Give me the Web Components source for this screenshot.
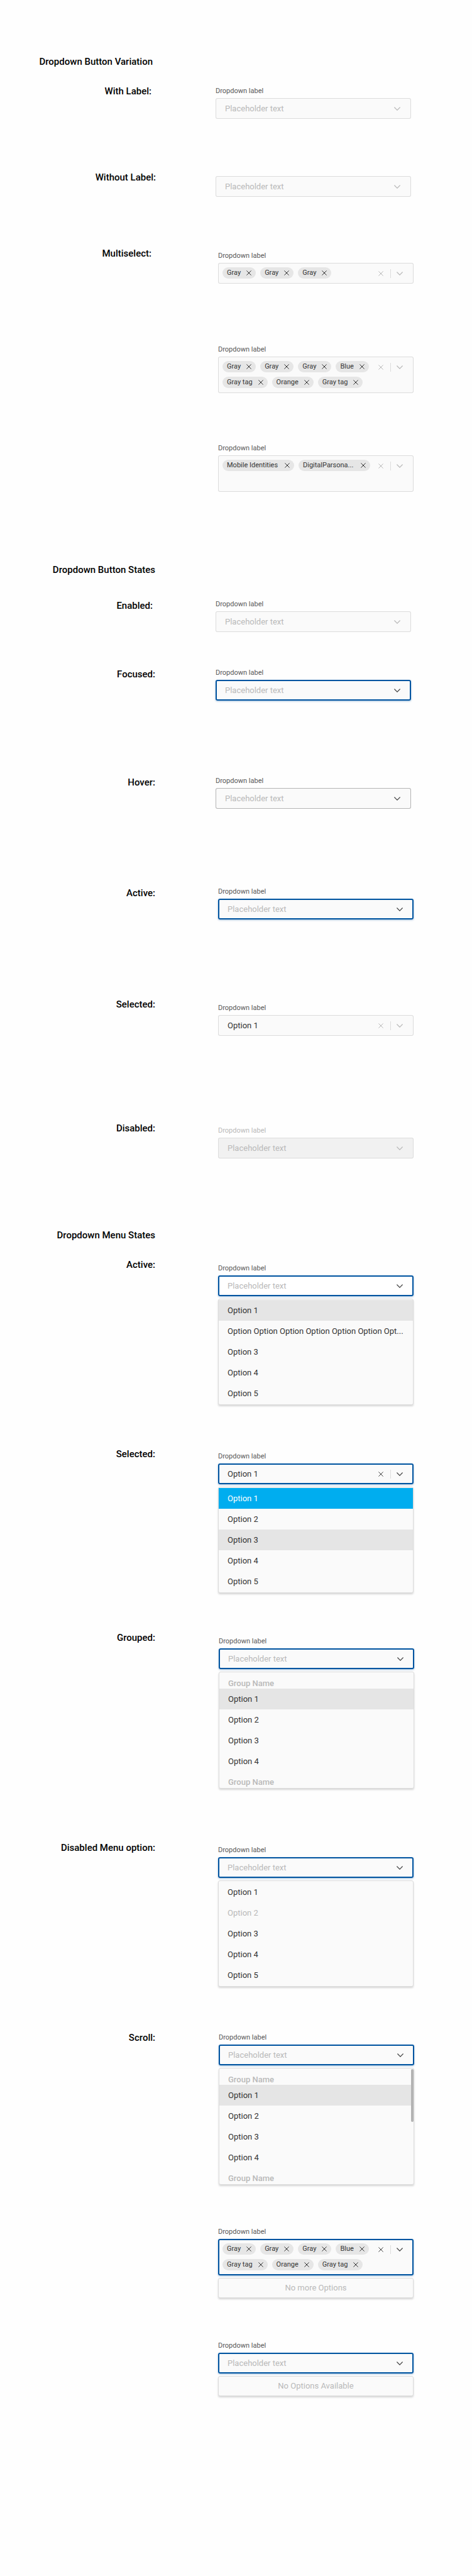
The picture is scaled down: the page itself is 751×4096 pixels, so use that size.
<!DOCTYPE html>
<html lang="en">
<head>
<meta charset="utf-8">
<meta name="viewport" content="width=device-width, initial-scale=1">
<title>Dropdown</title>
<style>
  body {
    margin: 0;
    background: #fefefe;
    color: #000;
    font-family: Roboto, "Liberation Sans", sans-serif;
  }
  main { padding: 88px 0 284px; }
</style>
</head>
<body>
<main>
  <spec-section heading="Dropdown Button Variation" edge="near">
    <spec-row title="With Label:" edge="near" lead="short" style="--space:27px"><drop-down label="Dropdown label"></drop-down></spec-row>
    <spec-row title="Without Label:" edge="mid" lead="short" drop="low" style="--space:83px"><drop-down></drop-down></spec-row>
    <spec-row title="Multiselect:" edge="near" drop="mid" style="--space:80px"><drop-down label="Dropdown label" chips="Gray|Gray|Gray"></drop-down></spec-row>
    <spec-row style="--space:97px"><drop-down label="Dropdown label" chips="Gray|Gray|Gray|Blue|Gray tag|Orange|Gray tag" tall></drop-down></spec-row>
    <spec-row style="--space:80px"><drop-down label="Dropdown label" chips="Mobile Identities|DigitalParsona..." tall></drop-down></spec-row>
  </spec-section>

  <spec-section heading="Dropdown Button States" style="--space:114px">
    <spec-row title="Enabled:" edge="inner" lead="short" drop="none" style="--space:37px"><drop-down label="Dropdown label"></drop-down></spec-row>
    <spec-row title="Focused:" lead="short" drop="none" style="--space:57px"><drop-down label="Dropdown label" state="focus"></drop-down></spec-row>
    <spec-row title="Hover:" lead="short" drop="none" style="--space:120px"><drop-down label="Dropdown label" state="hover"></drop-down></spec-row>
    <spec-row title="Active:" drop="none" style="--space:124px"><drop-down label="Dropdown label" state="focus"></drop-down></spec-row>
    <spec-row title="Selected:" drop="low" style="--space:125px"><drop-down label="Dropdown label" value="Option 1"></drop-down></spec-row>
    <spec-row title="Disabled:" drop="mid" style="--space:137px"><drop-down label="Dropdown label" state="disabled"></drop-down></spec-row>
  </spec-section>

  <spec-section heading="Dropdown Menu States" style="--space:112px">
    <spec-row title="Active:" drop="low" style="--space:27px">
      <drop-down label="Dropdown label" state="focus" blank>
        <drop-menu>
          <menu-option hover>Option 1</menu-option>
          <menu-option>Option Option Option Option Option Option Opt...</menu-option>
          <menu-option>Option 3</menu-option>
          <menu-option>Option 4</menu-option>
          <menu-option>Option 5</menu-option>
        </drop-menu>
      </drop-down>
    </spec-row>
    <spec-row title="Selected:" drop="mid" style="--space:68px">
      <drop-down label="Dropdown label" state="focus" value="Option 1">
        <drop-menu>
          <menu-option selected>Option 1</menu-option>
          <menu-option>Option 2</menu-option>
          <menu-option hover>Option 3</menu-option>
          <menu-option>Option 4</menu-option>
          <menu-option>Option 5</menu-option>
        </drop-menu>
      </drop-down>
    </spec-row>
    <spec-row title="Grouped:" drop="low" lead="long" style="--space:61px">
      <drop-down label="Dropdown label" state="focus">
        <drop-menu>
          <menu-group>Group Name</menu-group>
          <menu-option hover>Option 1</menu-option>
          <menu-option>Option 2</menu-option>
          <menu-option>Option 3</menu-option>
          <menu-option>Option 4</menu-option>
          <menu-group>Group Name</menu-group>
        </drop-menu>
      </drop-down>
    </spec-row>
    <spec-row title="Disabled Menu option:" drop="mid" style="--space:84px">
      <drop-down label="Dropdown label" state="focus">
        <drop-menu>
          <menu-option>Option 1</menu-option>
          <menu-option disabled>Option 2</menu-option>
          <menu-option>Option 3</menu-option>
          <menu-option>Option 4</menu-option>
          <menu-option>Option 5</menu-option>
        </drop-menu>
      </drop-down>
    </spec-row>
    <spec-row title="Scroll:" lead="long" style="--space:71px">
      <drop-down label="Dropdown label" state="focus">
        <drop-menu scroll>
          <menu-group>Group Name</menu-group>
          <menu-option hover>Option 1</menu-option>
          <menu-option>Option 2</menu-option>
          <menu-option>Option 3</menu-option>
          <menu-option>Option 4</menu-option>
          <menu-group>Group Name</menu-group>
        </drop-menu>
      </drop-down>
    </spec-row>
    <spec-row style="--space:67px">
      <drop-down label="Dropdown label" state="focus" chips="Gray|Gray|Gray|Blue|Gray tag|Orange|Gray tag" tall>
        <drop-menu empty>No more Options</drop-menu>
      </drop-down>
    </spec-row>
    <spec-row style="--space:68px">
      <drop-down label="Dropdown label" state="focus">
        <drop-menu empty>No Options Available</drop-menu>
      </drop-down>
    </spec-row>
  </spec-section>
</main>

<script>
const CHEVRON = `<svg width="10" height="6" viewBox="0 0 10 6" fill="none" stroke="currentColor" stroke-width="1.2" aria-hidden="true"><path d="M.4.5 5 5.1 9.6.5"/></svg>`;
const CROSS = `<svg width="8" height="8" viewBox="0 0 8 8" fill="none" stroke="currentColor" stroke-width="1" aria-hidden="true"><path d="M.4.4l7.2 7.2M7.6.4.4 7.6"/></svg>`;

/* A titled block; the heading ends on the same edge as the row titles. */
class SpecSection extends HTMLElement {
  connectedCallback() {
    if (this.shadowRoot) return;
    this.attachShadow({ mode: 'open' }).innerHTML = `
      <style>
        :host { display: block; margin-top: var(--space, 0px); --edge: 247; }
        :host([edge="near"]) { --edge: 243; }
        .head { display: flex; }
        h2 {
          flex: 0 0 calc(var(--edge) / 751 * 100%);
          margin: 0; text-align: right; white-space: nowrap;
          font-size: 15px; line-height: 20px; font-weight: 500;
        }
      </style>
      <section><div class="head"><h2></h2></div><slot></slot></section>`;
    this.shadowRoot.querySelector('h2').textContent = this.getAttribute('heading');
  }
}

/* One specimen: its name on the left, the component on the right. */
class SpecRow extends HTMLElement {
  connectedCallback() {
    if (this.shadowRoot) return;
    const title = this.getAttribute('title') || '';
    this.removeAttribute('title');
    this.attachShadow({ mode: 'open' }).innerHTML = `
      <style>
        :host { display: flex; align-items: flex-start; margin-top: var(--space, 0px); --edge: 247; --lead: 347; --drop: 2px; }
        :host([edge="near"]) { --edge: 241; }
        :host([edge="inner"]) { --edge: 243; }
        :host([edge="mid"]) { --edge: 248; }
        :host([lead="short"]) { --lead: 343; }
        :host([lead="long"]) { --lead: 348; }
        :host([drop="none"]) { --drop: 0px; }
        :host([drop="mid"]) { --drop: 6px; }
        :host([drop="low"]) { --drop: 8px; }
        :host([untitled]) { --drop: 0px; }
        h3 {
          flex: 0 0 calc(var(--edge) / 751 * 100%);
          margin: 0 calc((var(--lead) - var(--edge)) / 751 * 100%) 0 0;
          text-align: right; white-space: nowrap;
          font-size: 15px; line-height: 20px; font-weight: 500;
        }
        .blank { flex: 0 0 calc(var(--lead) / 751 * 100%); }
        .specimen { flex: 0 0 calc(311 / 751 * 100%); min-width: 0; padding-top: var(--drop); }
      </style>
      ${title ? '<h3></h3>' : '<div class="blank"></div>'}
      <div class="specimen"><slot></slot></div>`;
    if (title) this.shadowRoot.querySelector('h3').textContent = title;
    else this.setAttribute('untitled', '');
  }
}

/* The field: a plain select, or a box of chips when chips are given. */
class DropDown extends HTMLElement {
  connectedCallback() {
    if (this.shadowRoot) return;
    const label = this.getAttribute('label');
    const value = this.getAttribute('value');
    const chips = this.getAttribute('chips');
    const off = this.getAttribute('state') === 'disabled' ? 'disabled' : '';
    const clear = `<button type="button" aria-label="Clear">${CROSS}</button><span class="rule"></span>`;
    const chip = c => `<span class="chip${c.length > 12 ? ' long' : ''}">${c}<button type="button" aria-label="Remove ${c}">${CROSS}</button></span>`;
    const field = chips
      ? `<div class="chips">${chips.split('|').map(chip).join('')}<input id="field" type="text" autocomplete="off"></div>
        <div class="tools">${clear}<button type="button" aria-label="Open">${CHEVRON}</button></div>`
      : `<select id="field" ${label ? '' : 'aria-label="Dropdown"'} ${off}><option>${value || 'Placeholder text'}</option></select>
        <div class="tools">${value ? clear : ''}${CHEVRON}</div>`;
    this.attachShadow({ mode: 'open' }).innerHTML = `
      <style>
        :host { display: block; --line: #dcdcdc; --fill: #fafafa; --tool: #b9b9b9; --ink: #b9b9b9; --name: #575757; --w: 1px; }
        :host([value]) { --ink: #333; }
        :host([state="hover"]) { --line: #b4b4b4; --tool: #444; }
        :host([state="focus"]) { --line: #0054a0; --tool: #444; --w: 2px; --glow: 0 1px 3px rgba(0, 84, 160, .4); }
        :host([state="disabled"]) { --fill: #f1f1f1; --name: #b9b9b9; }
        :host([blank]) { --fill: #fff; }
        label { display: block; margin-bottom: 3px; font-size: 11px; line-height: 16px; color: var(--name); }
        .field {
          display: flex; align-items: flex-start; box-sizing: border-box;
          min-height: 33px; border-radius: 3px;
          background: var(--fill); box-shadow: inset 0 0 0 var(--w) var(--line), var(--glow, 0 0 0 transparent);
        }
        :host([tall]) .field { min-height: 58px; }
        select, input { appearance: none; border: 0; outline: 0; margin: 0; background: none; font: inherit; color: var(--ink); }
        select { flex: 1; min-width: 0; height: 33px; padding: 0 0 0 15px; font-size: 13px; line-height: 33px; opacity: 1; }
        .chips { flex: 1; min-width: 0; display: flex; flex-wrap: wrap; gap: 7px; padding: 7px 0 7px 7px; }
        .chip {
          display: flex; align-items: center; justify-content: space-between; gap: 9px;
          box-sizing: border-box; height: 18px; padding: 0 7px; border-radius: 9px;
          background: #e6e6e6; color: #333; font-size: 11px; line-height: 18px; white-space: nowrap;
        }
        .chip.long { min-width: 114px; }
        input { flex: 1 1 0; width: 0; min-width: 0; height: 18px; padding: 0; }
        .tools { display: flex; align-items: center; height: 33px; padding-right: 17px; color: var(--tool); }
        .rule { width: 1px; height: 14px; margin: 0 9px 0 11px; background: #dcdcdc; }
        button { display: block; padding: 0; border: 0; background: none; color: inherit; }
        svg { display: block; }
      </style>
      ${label ? `<label for="field">${label}</label>` : ''}
      <div class="field">${field}</div>
      <slot></slot>`;
  }
}

class DropMenu extends HTMLElement {
  connectedCallback() {
    if (this.shadowRoot) return;
    this.setAttribute('role', this.hasAttribute('empty') ? 'status' : 'listbox');
    this.attachShadow({ mode: 'open' }).innerHTML = `
      <style>
        :host {
          display: block; position: relative; margin-top: 4px; padding: 1px 0;
          border: 1px solid #dcdcdc; border-radius: 3px; background: #fafafa;
          box-shadow: 0 2px 3px rgba(0, 0, 0, .16);
        }
        :host([empty]) { padding: 0; text-align: center; font-size: 13px; line-height: 30px; color: #b9b9b9; }
        .thumb { display: none; position: absolute; top: 1px; right: 0; width: 4px; height: 84px; border-radius: 2px; background: #b3b3b3; }
        :host([scroll]) .thumb { display: block; }
      </style>
      <slot></slot><span class="thumb"></span>`;
  }
}

class MenuOption extends HTMLElement {
  connectedCallback() {
    if (this.shadowRoot) return;
    this.setAttribute('role', 'option');
    this.attachShadow({ mode: 'open' }).innerHTML = `
      <style>
        :host { display: block; padding: 0 14px; font-size: 13px; line-height: 33px; color: #333; white-space: nowrap; }
        :host([hover]) { background: #e5e5e5; }
        :host([selected]) { background: #00adef; color: #fff; }
        :host([disabled]) { color: #b9b9b9; }
      </style><slot></slot>`;
  }
}

class MenuGroup extends HTMLElement {
  connectedCallback() {
    if (this.shadowRoot) return;
    this.attachShadow({ mode: 'open' }).innerHTML = `
      <style>
        :host { display: block; padding: 9px 14px 0; font-size: 13px; line-height: 16px; font-weight: 500; color: #b9b9b9; }
      </style><slot></slot>`;
  }
}

customElements.define('spec-section', SpecSection);
customElements.define('spec-row', SpecRow);
customElements.define('drop-down', DropDown);
customElements.define('drop-menu', DropMenu);
customElements.define('menu-option', MenuOption);
customElements.define('menu-group', MenuGroup);
</script>
</body>
</html>
